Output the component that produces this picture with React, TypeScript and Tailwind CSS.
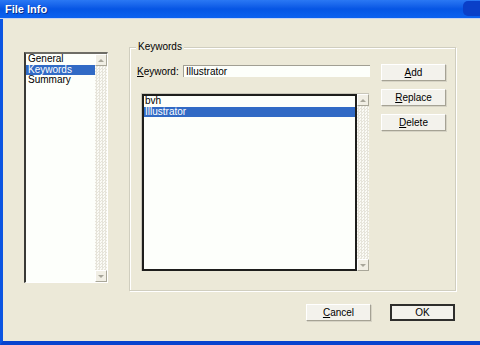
const font = "font-['Liberation_Sans',Arial,sans-serif]";

function Arrow({ down }: { down?: boolean }) {
  return (
    <div className="w-[12px] h-[12px] shrink-0 bg-[#F1EFE5] border border-t-white border-l-white border-r-[#A9A799] border-b-[#A9A799] flex items-center justify-center">
      {down ? (
        <div className="w-0 h-0 border-l-[3px] border-r-[3px] border-t-[3px] border-l-transparent border-r-transparent border-t-[#A8A69A]" />
      ) : (
        <div className="w-0 h-0 border-l-[3px] border-r-[3px] border-b-[3px] border-l-transparent border-r-transparent border-b-[#A8A69A]" />
      )}
    </div>
  );
}

function ScrollBar() {
  return (
    <div className="w-[12px] h-full flex flex-col shrink-0">
      <Arrow />
      <div className="flex-1 bg-[image:repeating-conic-gradient(#E6E4DA_0_25%,#FBFBF6_0_50%)] bg-[length:3px_3px]" />
      <Arrow down />
    </div>
  );
}

function Button({ u, rest, isDefault }: { u: string; rest: string; isDefault?: boolean }) {
  return (
    <div
      className={
        "w-[65px] h-[17px] flex items-center justify-center text-[10px] text-black bg-[#F3F2EC] " +
        (isDefault
          ? "border-2 border-[#2E2E2C]"
          : "border border-t-white border-l-white border-r-[#A5A294] border-b-[#A5A294] shadow-[1px_1px_0_#D6D3C5]")
      }
    >
      <u>{u}</u>
      {rest}
    </div>
  );
}

export default function App() {
  return (
    <div className={"w-[480px] h-[345px] flex flex-col overflow-hidden " + font}>
      {/* Title bar */}
      <div className="h-[19px] shrink-0 flex items-center justify-between bg-gradient-to-b from-[#2A78F4] via-[#0655E4] to-[#0C62F0] border-b border-b-[#C8D4F0]">
        <span className="pl-[5px] text-[11px] font-bold text-white [text-shadow:1px_1px_0_#0A2E8A]">File Info</span>
        <div className="self-start mt-[1px] w-[17px] h-[15px] bg-[#0A3FC8] rounded-l-[5px]" />
      </div>

      {/* Body */}
      <div className="flex-1 flex flex-col bg-[#ECE9D8] border-l-[3px] border-l-[#0B55E2] border-b-[4px] border-b-[#0843CE]">
        <div className="flex items-start pl-[21px] pt-[28px]">
          {/* Category list */}
          <div className="mt-[5px] w-[84px] h-[231px] flex bg-[#FDFFFB] border-l-2 border-t-2 border-l-[#3A3A36] border-t-[#6E6D66] border-r border-b border-r-white border-b-white text-[10px] leading-[10.5px] text-black">
            <div className="flex-1 flex flex-col">
              <div className="pl-[2px]">General</div>
              <div className="pl-[2px] bg-[#316AC5] text-white">Keywords</div>
              <div className="pl-[2px]">Summary</div>
            </div>
            <ScrollBar />
          </div>

          {/* Keywords group */}
          <div className="ml-[21px] w-[327px] h-[244px] relative border border-[#D0CEBF] shadow-[inset_1px_1px_0_#FFFFFF,1px_1px_0_#FFFFFF]">
            <span className="absolute left-[6px] -top-[7px] px-[2px] bg-[#ECE9D8] text-[10px] leading-[12px] text-black">Keywords</span>
            <div className="flex pl-[7px] pt-[16px] gap-[11px]">
              <div className="w-[233px] flex flex-col">
                <div className="mt-[1px] flex items-center h-[12px] text-[10px] text-black">
                  <span className="w-[46px]">
                    <u>K</u>eyword:
                  </span>
                  <div className="w-[187px] h-[12px] flex items-center pl-[2px] bg-[#FDFFFB] border-t border-l border-t-[#A19F93] border-l-[#A19F93] leading-[10px]">
                    Illustrator
                  </div>
                </div>
                <div className="mt-[16px] ml-[4px] w-[228px] h-[178px] flex border-t border-l border-t-[#C9C7BA] border-l-[#C9C7BA] bg-[#ECE9D8]">
                  <div className="flex-1 flex flex-col bg-[#FDFFFB] border-2 border-[#1E1E1C] text-[10px] leading-[10.5px] text-black">
                    <div className="pl-[1px]">bvh</div>
                    <div className="pl-[1px] bg-[#316AC5] text-white">Illustrator</div>
                  </div>
                  <ScrollBar />
                </div>
              </div>
              <div className="flex flex-col gap-[8px]">
                <Button u="A" rest="dd" />
                <Button u="R" rest="eplace" />
                <Button u="D" rest="elete" />
              </div>
            </div>
          </div>
        </div>

        {/* Bottom buttons */}
        <div className="flex justify-end gap-[19px] pr-[25px] mt-[13px]">
          <Button u="C" rest="ancel" />
          <Button u="" rest="OK" isDefault />
        </div>
      </div>
    </div>
  );
}
